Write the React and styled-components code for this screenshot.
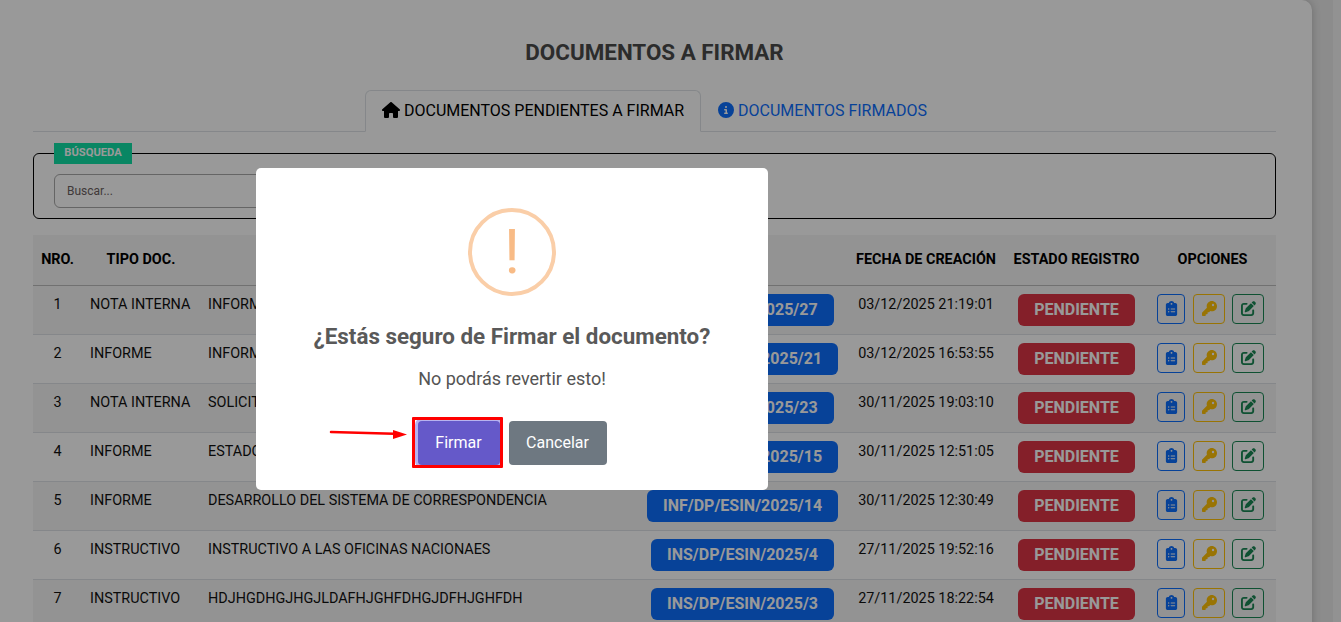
import React from "react";
import styled, { createGlobalStyle } from "styled-components";
import { FaHouse, FaCircleInfo, FaClipboardList, FaKey, FaPenToSquare } from "react-icons/fa6";

const Global = createGlobalStyle`
  html, body { margin: 0; padding: 0; height: 622px; overflow: hidden; background: #e9e9e9; }
  body { font-family: Roboto, "Liberation Sans", sans-serif; color: #212529; }
  * { box-sizing: border-box; }
`;

const Shell = styled.div`
  display: flex;
  height: 622px;
  overflow: hidden;
`;
const Card = styled.main`
  flex: 0 0 1312px;
  height: 640px;
  background: #fff;
  border-radius: 0 10px 0 0;
  box-shadow: 0 0 8px rgba(0, 0, 0, 0.22);
  padding: 39px 36px 0 33px;
  position: relative;
`;
const Gutter = styled.div`
  flex: 1;
  background: #e9e9e9;
`;
const ScrollStrip = styled.div`
  flex: 0 0 8px;
  background: #f3f3f3;
`;
const Title = styled.h1`
  margin: 0;
  font-size: 22.4px;
  line-height: 26px;
  font-weight: 700;
  text-align: center;
  color: #4a4a4a;
`;
const Tabs = styled.nav`
  display: flex;
  justify-content: center;
  margin-top: 25px;
  border-bottom: 1px solid #dee2e6;
  height: 42px;
`;
const Tab = styled.a`
  display: flex;
  align-items: center;
  gap: 4px;
  height: 42px;
  padding: 0 16px 2px;
  font-size: 16px;
  border: 1px solid ${(p) => (p.$active ? "#dee2e6" : "transparent")};
  border-bottom-color: ${(p) => (p.$active ? "#fff" : "transparent")};
  border-radius: 6px 6px 0 0;
  background: ${(p) => (p.$active ? "#fff" : "transparent")};
  color: ${(p) => (p.$active ? "#000" : "#0d6efd")};
  svg { flex: none; }
`;
const SearchBox = styled.section`
  position: relative;
  margin-top: 21px;
  height: 66px;
  border: 1px solid #000;
  border-radius: 6px;
  padding: 20px;
`;
const Legend = styled.span`
  position: absolute;
  left: 20px;
  top: -11px;
  width: 78px;
  height: 21px;
  padding-bottom: 2px;
  display: flex;
  align-items: center;
  justify-content: center;
  background: #0fdfa6;
  color: #fff;
  font-size: 11.2px;
  font-weight: 700;
`;
const SearchInput = styled.input`
  display: block;
  width: 640px;
  height: 34px;
  padding: 0 12px;
  border: 1px solid #a8a8a8;
  border-radius: 6px;
  font: 400 12px Roboto, sans-serif;
  background: transparent;
  &::placeholder { color: #6c5f5f; opacity: 1; }
`;
const Table = styled.table`
  width: 1243px;
  margin-top: 16px;
  border-collapse: collapse;
  table-layout: fixed;
`;
const Th = styled.th`
  height: 50px;
  padding: 0;
  font-size: 14.4px;
  font-weight: 700;
  text-align: center;
  color: #000;
  background: #f5f5f5;
  border-bottom: 1px solid #bdbdbd;
  white-space: nowrap;
  &:last-child { padding-left: 2px; }
`;
const Row = styled.tr`
  height: 49px;
  background: ${(p) => (p.$odd ? "#f5f5f5" : "#fff")};
  border-bottom: 1px solid #dee2e6;
`;
const Td = styled.td`
  padding: 8px;
  vertical-align: top;
  font-size: 14.4px;
  line-height: 21px;
  color: #111;
  text-align: ${(p) => p.$align || "left"};
  white-space: nowrap;
  overflow: hidden;
`;
const Badge = styled.span`
  display: inline-block;
  height: 32px;
  padding: 0 16px;
  line-height: 32px;
  border-radius: 6px;
  font-size: 16px;
  font-weight: 700;
  color: #fff;
  background: ${(p) => p.$bg};
`;
const Actions = styled.div`
  display: flex;
  gap: 8px;
  padding-left: 2px;
`;
const IconBtn = styled.button`
  width: ${(p) => p.$w}px;
  height: 30px;
  padding: 0;
  display: flex;
  align-items: center;
  justify-content: center;
  background: transparent;
  border: 1px solid ${(p) => p.$c};
  border-radius: 4px;
  color: ${(p) => p.$c};
  font-size: 15px;
  &:last-child { margin-left: -1px; }
`;
const Overlay = styled.div`
  position: fixed;
  inset: 0;
  background: rgba(0, 0, 0, 0.4);
  display: flex;
  align-items: flex-start;
  padding: 168px 0 0 256px;
`;
const Modal = styled.div`
  position: relative;
  width: 512px;
  height: 322px;
  background: #fff;
  border-radius: 5px;
  display: flex;
  flex-direction: column;
  align-items: center;
  padding-top: 40px;
`;
const AlertIcon = styled.div`
  width: 88px;
  height: 88px;
  border: 4px solid #facea8;
  border-radius: 50%;
  display: flex;
  align-items: center;
  justify-content: center;
  color: #f8bb86;
  font-size: 62px;
  line-height: 1;
  font-weight: 400;
`;
const ModalTitle = styled.h2`
  margin: 26px 0 0;
  font-size: 22.4px;
  line-height: 28px;
  font-weight: 700;
  color: #595959;
`;
const ModalText = styled.p`
  margin: 16px 0 0;
  font-size: 18px;
  line-height: 26px;
  color: #545454;
`;
const ModalActions = styled.div`
  display: flex;
  gap: 9px;
  margin-top: 29px;
`;
const ConfirmBtn = styled.button`
  width: ${(p) => p.$w}px;
  height: 44px;
  padding: 0 0 2px;
  border: 0;
  border-radius: 4px;
  font: 400 16px Roboto, sans-serif;
  color: #fff;
  background: ${(p) => p.$bg};
  box-shadow: ${(p) => (p.$focus ? "0 0 0 3px rgba(112, 102, 224, 0.5)" : "none")};
`;
const RedFrame = styled.div`
  position: absolute;
  left: 156px;
  top: 249px;
  width: 91px;
  height: 51px;
  border: 3px solid #f00;
  border-radius: 1px;
  pointer-events: none;
`;
const Arrow = styled.svg`
  position: absolute;
  left: 72px;
  top: 258px;
  width: 82px;
  height: 14px;
`;

const rows = [
  ["1", "NOTA INTERNA", "INFORME DE ACTIVIDADES", "NI/DP/ESIN/2025/27", "03/12/2025 21:19:01"],
  ["2", "INFORME", "INFORME DE ACTIVIDADES", "INF/DP/ESIN/2025/21", "03/12/2025 16:53:55"],
  ["3", "NOTA INTERNA", "SOLICITUD DE ACTIVIDADES", "NI/DP/ESIN/2025/23", "30/11/2025 19:03:10"],
  ["4", "INFORME", "ESTADO DEL SISTEMA", "INF/DP/ESIN/2025/15", "30/11/2025 12:51:05"],
  ["5", "INFORME", "DESARROLLO DEL SISTEMA DE CORRESPONDENCIA", "INF/DP/ESIN/2025/14", "30/11/2025 12:30:49"],
  ["6", "INSTRUCTIVO", "INSTRUCTIVO A LAS OFICINAS NACIONAES", "INS/DP/ESIN/2025/4", "27/11/2025 19:52:16"],
  ["7", "INSTRUCTIVO", "HDJHGDHGJHGJLDAFHJGHFDHGJDFHJGHFDH", "INS/DP/ESIN/2025/3", "27/11/2025 18:22:54"],
];
const widths = [49, 118, 439, 207, 160, 141, 129];
const heads = ["NRO.", "TIPO DOC.", "", "", "FECHA DE CREACIÓN", "ESTADO REGISTRO", "OPCIONES"];

export default function App() {
  return (
    <>
      <Global />
      <Shell>
        <Card>
          <Title>DOCUMENTOS A FIRMAR</Title>
          <Tabs>
            <Tab $active><FaHouse size={18} />DOCUMENTOS PENDIENTES A FIRMAR</Tab>
            <Tab><FaCircleInfo size={16} />DOCUMENTOS FIRMADOS</Tab>
          </Tabs>
          <SearchBox>
            <Legend>BÚSQUEDA</Legend>
            <SearchInput placeholder="Buscar..." />
          </SearchBox>
          <Table>
            <colgroup>{widths.map((w, i) => <col key={i} width={w} />)}</colgroup>
            <thead>
              <tr>{heads.map((h, i) => <Th key={i}>{h}</Th>)}</tr>
            </thead>
            <tbody>
              {rows.map((r, i) => (
                <Row key={r[0]} $odd={i % 2 === 0}>
                  <Td $align="center">{r[0]}</Td>
                  <Td>{r[1]}</Td>
                  <Td>{r[2]}</Td>
                  <Td $align="center"><Badge $bg="#0d6efd">{r[3]}</Badge></Td>
                  <Td $align="center">{r[4]}</Td>
                  <Td $align="center"><Badge $bg="#dc3545">PENDIENTE</Badge></Td>
                  <Td>
                    <Actions>
                      <IconBtn $w={28} $c="#0d6efd"><FaClipboardList /></IconBtn>
                      <IconBtn $w={32} $c="#ffc107"><FaKey /></IconBtn>
                      <IconBtn $w={32} $c="#198754"><FaPenToSquare /></IconBtn>
                    </Actions>
                  </Td>
                </Row>
              ))}
            </tbody>
          </Table>
        </Card>
        <Gutter />
        <ScrollStrip />
      </Shell>
      <Overlay>
        <Modal>
          <AlertIcon>!</AlertIcon>
          <ModalTitle>¿Estás seguro de Firmar el documento?</ModalTitle>
          <ModalText>No podrás revertir esto!</ModalText>
          <ModalActions>
            <ConfirmBtn $w={82} $bg="#6559c9" $focus>Firmar</ConfirmBtn>
            <ConfirmBtn $w={98} $bg="#6e7881">Cancelar</ConfirmBtn>
          </ModalActions>
          <RedFrame />
          <Arrow viewBox="0 0 82 14">
            <path d="M3 6 L66 7.8" stroke="#f00" strokeWidth="2.5" fill="none" strokeLinecap="round" />
            <path d="M65 4 L79 8.6 L65 13 Z" fill="#f00" />
          </Arrow>
        </Modal>
      </Overlay>
    </>
  );
}
